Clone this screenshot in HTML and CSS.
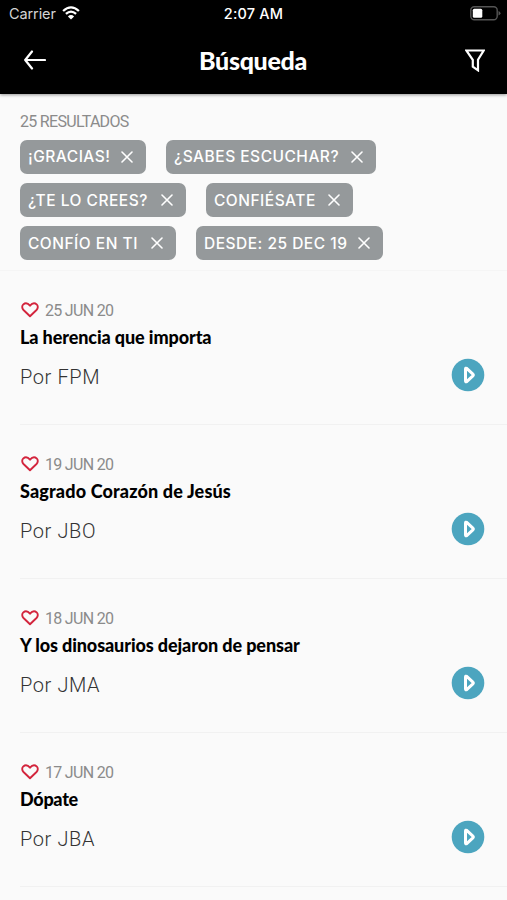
FILE: index.html
```html
<!DOCTYPE html>
<html lang="es">
<head>
    <meta charset="UTF-8">
    <meta name="viewport" content="width=device-width, initial-scale=1.0">
    <title>Búsqueda</title>
    <link rel="stylesheet" href="styles.css">
</head>
<body>
<svg class="sprite">
    <symbol id="close" viewBox="0 0 12 12"><path d="M1 1l10 10M11 1L1 11"/></symbol>
    <symbol id="heart" viewBox="0 0 18 16"><path d="M9 14.2L2.500 8C.8 6.300.8 3.700 2.300 2.400 4.300.8 7 1.300 9 3.700 11 1.300 13.700.8 15.700 2.400 17.200 3.700 17.200 6.300 15.500 8z"/></symbol>
    <symbol id="play" viewBox="0 0 34 34"><circle cx="17" cy="17" r="16.300"/><path d="M14.500 10.900v12.200q0 1.200 1.200.5l6.200-5.800q.9-.8 0-1.600l-6.200-5.800q-1.200-.7-1.200.5z"/></symbol>
</svg>

<header class="header">
    <div class="status">
        <div class="status__left">
            <span class="carrier">Carrier</span>
            <svg class="wifi" viewBox="0 0 18 14">
                <path class="arc" d="M1.100 5Q9-2.300 16.900 5M3.900 7.900Q9 3.300 14.100 7.900"/>
                <path class="dot" d="M9 13.500L5.900 10.400Q9 7.800 12.100 10.400z"/>
            </svg>
        </div>
        <span class="time">2:07 AM</span>
        <svg class="battery" viewBox="0 0 31 15">
            <rect class="case" x=".8" y=".8" width="26.400" height="12.900" rx="3.500"/>
            <rect class="level" x="2.800" y="2.800" width="9.500" height="9" rx="1.500"/>
            <path class="tip" d="M28.500 5v4.500q2-.7 2-2.250T28.500 5z"/>
        </svg>
    </div>
    <div class="navbar">
        <svg class="back" viewBox="0 0 22 20"><path d="M21 10H1.500M8 1.500L1.200 10 8 18.500"/></svg>
        <h1 class="title">Búsqueda</h1>
        <svg class="filter" viewBox="0 0 20 23"><path d="M1.300 1.500h17.400l-5.700 9.300v10.500L7.800 17.700v-6.900z"/></svg>
    </div>
</header>

<section class="filters">
    <p class="count">25 RESULTADOS</p>
    <div class="chips">
        <div class="chip chip--gracias"><span>¡GRACIAS!</span><svg><use href="#close"/></svg></div>
        <div class="chip chip--sabes"><span>¿SABES ESCUCHAR?</span><svg><use href="#close"/></svg></div>
        <div class="chip chip--crees"><span>¿TE LO CREES?</span><svg><use href="#close"/></svg></div>
        <div class="chip chip--confiesate"><span>CONFIÉSATE</span><svg><use href="#close"/></svg></div>
        <div class="chip chip--confio"><span>CONFÍO EN TI</span><svg><use href="#close"/></svg></div>
        <div class="chip chip--desde"><span>DESDE: 25 DEC 19</span><svg><use href="#close"/></svg></div>
    </div>
</section>

<main class="results">
    <article class="item">
        <div class="item__date"><svg class="heart"><use href="#heart"/></svg><span>25 JUN 20</span></div>
        <h2 class="item__title">La herencia que importa</h2>
        <div class="item__row"><span class="author">Por FPM</span><svg class="play"><use href="#play"/></svg></div>
    </article>
    <article class="item">
        <div class="item__date"><svg class="heart"><use href="#heart"/></svg><span>19 JUN 20</span></div>
        <h2 class="item__title item__title--wide">Sagrado Corazón de Jesús</h2>
        <div class="item__row"><span class="author">Por JBO</span><svg class="play"><use href="#play"/></svg></div>
    </article>
    <article class="item">
        <div class="item__date"><svg class="heart"><use href="#heart"/></svg><span>18 JUN 20</span></div>
        <h2 class="item__title">Y los dinosaurios dejaron de pensar</h2>
        <div class="item__row"><span class="author">Por JMA</span><svg class="play"><use href="#play"/></svg></div>
    </article>
    <article class="item">
        <div class="item__date"><svg class="heart"><use href="#heart"/></svg><span>17 JUN 20</span></div>
        <h2 class="item__title item__title--tight">Dópate</h2>
        <div class="item__row"><span class="author">Por JBA</span><svg class="play"><use href="#play"/></svg></div>
    </article>
</main>
</body>
</html>
```
FILE: styles.css
```css
* {
  box-sizing: border-box;
}

body {
  margin: 0;
  height: 900px;
  overflow: hidden;
  background: #fafafa;
  font-family: Roboto, sans-serif;
}

h1, h2, p {
  margin: 0;
}

svg {
  display: block;
  flex: none;
  fill: none;
  stroke-linecap: round;
  stroke-linejoin: round;
}

.sprite {
  display: none;
}

/* Header */
.header {
  height: 94px;
  background: #000;
  color: #fff;
  box-shadow: 0 1px 3px rgba(0, 0, 0, 0.4);
}

.status {
  display: grid;
  grid-template-columns: 1fr auto 1fr;
  align-items: center;
  height: 27px;
  padding: 0 6px 0 9px;
  font-family: Inter, sans-serif;
  font-size: 14.5px;
}

.status__left {
  display: flex;
  align-items: center;
  gap: 6px;
}

.carrier {
  color: #d4d4d4;
  letter-spacing: -0.1px;
}

.wifi {
  width: 18px;
  height: 14px;
  margin-bottom: 1px;
}

.wifi .arc {
  stroke: #fff;
  stroke-width: 2.3;
  stroke-linecap: butt;
}

.wifi .dot {
  fill: #fff;
}

.time {
  margin-right: 3px;
  font-weight: 500;
  letter-spacing: 0.2px;
}

.battery {
  width: 31px;
  height: 15px;
  justify-self: end;
}

.battery .case {
  stroke: #555;
  stroke-width: 1.4;
}

.battery .level {
  fill: #fff;
}

.battery .tip {
  fill: #555;
}

.navbar {
  display: grid;
  grid-template-columns: 1fr auto 1fr;
  align-items: center;
  height: 66px;
  padding: 0 22px 0 24px;
}

.back {
  width: 22px;
  height: 20px;
  stroke: #fff;
  stroke-width: 2.2;
}

.title {
  margin-right: 3px;
  font: 900 25px/32px Lato, sans-serif;
  letter-spacing: -0.3px;
}

.filter {
  width: 20px;
  height: 23px;
  justify-self: end;
  stroke: #fff;
  stroke-width: 2.2;
  stroke-linejoin: miter;
}

/* Filters */
.filters {
  height: 177px;
  padding: 18px 20px 0;
  border-bottom: 1px solid #f5f5f5;
}

.count {
  height: 28px;
  color: #8b8b8b;
  font-size: 16px;
  line-height: 20px;
  letter-spacing: -0.7px;
}

.chips {
  display: flex;
  flex-wrap: wrap;
  gap: 9.5px 20px;
}

.chip {
  display: flex;
  align-items: center;
  justify-content: space-between;
  height: 33.7px;
  padding: 1px 13px 0 8px;
  border-radius: 7px;
  background: #95999b;
  color: #fff;
  font: 500 15.5px/20px Inter, sans-serif;
  letter-spacing: 0.5px;
  white-space: nowrap;
}

.chip svg {
  width: 12px;
  height: 12px;
  margin-bottom: 1px;
  stroke: #fff;
  stroke-width: 1.6;
}

.chip--gracias {
  width: 126px;
}

.chip--sabes {
  width: 210px;
}

.chip--crees {
  width: 166px;
}

.chip--confiesate {
  width: 147px;
}

.chip--confio {
  width: 156px;
}

.chip--desde {
  width: 187px;
}

/* Results */
.results {
  padding-left: 20px;
}

.item {
  height: 154px;
  padding: 29px 22px 0 0;
  border-bottom: 1px solid #f1f1f1;
}

.item__date {
  display: flex;
  align-items: center;
  gap: 6px;
  height: 20px;
  color: #8b8b8b;
  font-size: 16px;
  letter-spacing: -0.7px;
}

.heart {
  width: 18px;
  height: 16px;
  margin-left: 1px;
  stroke: #d3243c;
  stroke-width: 1.9;
}

.item__title {
  margin-top: 5px;
  color: #000;
  font: 900 18px/24px Lato, sans-serif;
  letter-spacing: -0.1px;
}

.item__title--wide {
  letter-spacing: 0.15px;
}

.item__title--tight {
  letter-spacing: -0.3px;
}

.item__row {
  display: flex;
  align-items: center;
  justify-content: space-between;
  height: 34px;
  margin-top: 9px;
}

.author {
  margin-top: 4px;
  color: #333;
  font-size: 20px;
  font-weight: 300;
  letter-spacing: 0.6px;
}

.play {
  width: 34px;
  height: 34px;
  fill: #4ca5bf;
}

#play path {
  stroke: #fff;
  stroke-width: 3;
}
```
